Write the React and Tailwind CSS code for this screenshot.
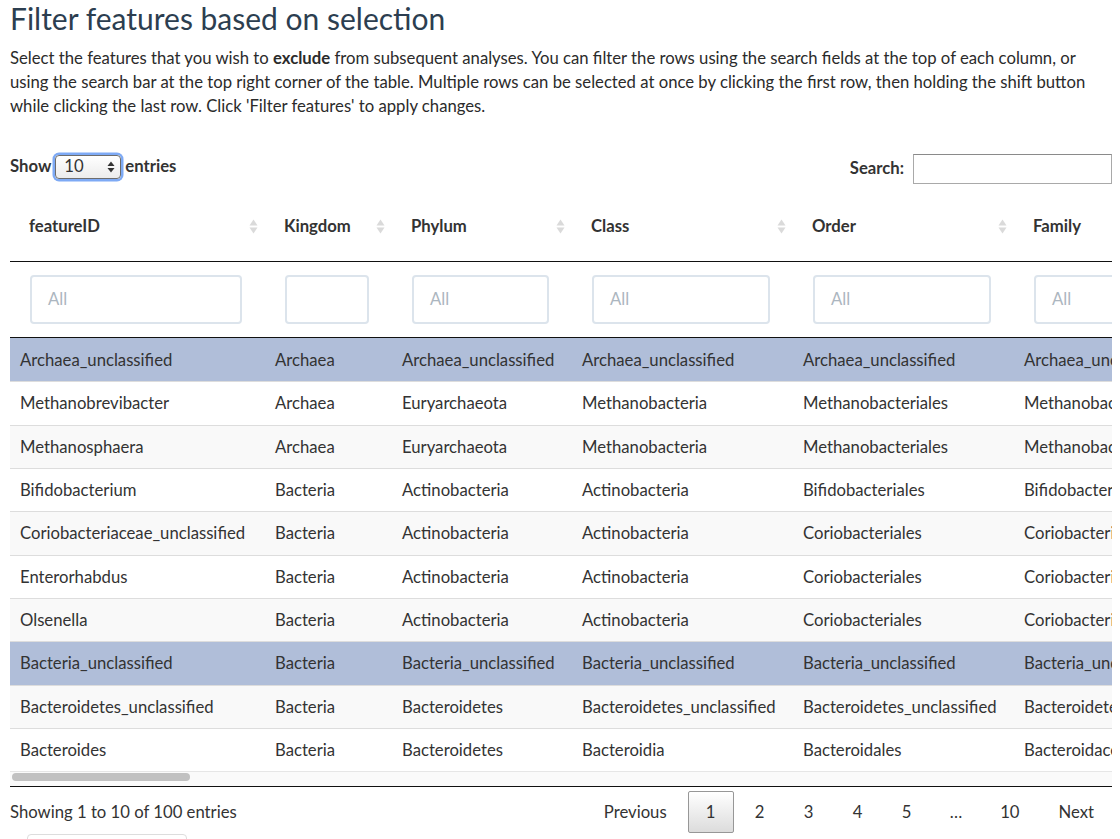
const columns = [
  { name: 'featureID', width: 'w-[255px]' },
  { name: 'Kingdom', width: 'w-[127px]' },
  { name: 'Phylum', width: 'w-[180px]' },
  { name: 'Class', width: 'w-[221px]' },
  { name: 'Order', width: 'w-[221px]' },
  { name: 'Family', width: 'w-[221px]' },
  { name: 'Genus', width: 'w-[221px]' },
];

const rows = [
  { selected: true, cells: ['Archaea_unclassified', 'Archaea', 'Archaea_unclassified', 'Archaea_unclassified', 'Archaea_unclassified', 'Archaea_unclassified', 'Archaea_unclassified'] },
  { cells: ['Methanobrevibacter', 'Archaea', 'Euryarchaeota', 'Methanobacteria', 'Methanobacteriales', 'Methanobacteriaceae', 'Methanobrevibacter'] },
  { cells: ['Methanosphaera', 'Archaea', 'Euryarchaeota', 'Methanobacteria', 'Methanobacteriales', 'Methanobacteriaceae', 'Methanosphaera'] },
  { cells: ['Bifidobacterium', 'Bacteria', 'Actinobacteria', 'Actinobacteria', 'Bifidobacteriales', 'Bifidobacteriaceae', 'Bifidobacterium'] },
  { cells: ['Coriobacteriaceae_unclassified', 'Bacteria', 'Actinobacteria', 'Actinobacteria', 'Coriobacteriales', 'Coriobacteriaceae', 'Coriobacteriaceae_unclassified'] },
  { cells: ['Enterorhabdus', 'Bacteria', 'Actinobacteria', 'Actinobacteria', 'Coriobacteriales', 'Coriobacteriaceae', 'Enterorhabdus'] },
  { cells: ['Olsenella', 'Bacteria', 'Actinobacteria', 'Actinobacteria', 'Coriobacteriales', 'Coriobacteriaceae', 'Olsenella'] },
  { selected: true, cells: ['Bacteria_unclassified', 'Bacteria', 'Bacteria_unclassified', 'Bacteria_unclassified', 'Bacteria_unclassified', 'Bacteria_unclassified', 'Bacteria_unclassified'] },
  { cells: ['Bacteroidetes_unclassified', 'Bacteria', 'Bacteroidetes', 'Bacteroidetes_unclassified', 'Bacteroidetes_unclassified', 'Bacteroidetes_unclassified', 'Bacteroidetes_unclassified'] },
  { cells: ['Bacteroides', 'Bacteria', 'Bacteroidetes', 'Bacteroidia', 'Bacteroidales', 'Bacteroidaceae', 'Bacteroides'] },
];

function SortIcon() {
  return (
    <svg width="9" height="15" viewBox="0 0 9 15" className="shrink-0">
      <path d="M4.5 0.5 L8.5 6.5 L0.5 6.5 Z" fill="#dadada" />
      <path d="M0.5 8.5 L8.5 8.5 L4.5 14.5 Z" fill="#dadada" />
    </svg>
  );
}

function PageButton({ children, active }) {
  return (
    <span
      className={`ml-[3px] min-w-[46px] px-[17px] py-2 text-center leading-6 rounded-[2px] border ${
        active
          ? 'border-[#979797] bg-gradient-to-b from-white to-[#dcdcdc] text-[#333]'
          : 'border-transparent text-[#333]'
      }`}
    >
      {children}
    </span>
  );
}

export default function App() {
  return (
    <div className="w-[1120px] h-[839px] overflow-hidden bg-white text-[#333] font-['Lato','Open_Sans',sans-serif] text-[16.7px]">
      <div className="pl-[10px] pr-[8px]">
        <h1 className="text-[30px] leading-[36px] text-[#2c3e50]">Filter features based on selection</h1>
        <p className="mt-[10px] leading-6 text-[#2b2b2b]">
          Select the features that you wish to <b>exclude</b> from subsequent analyses. You can filter the rows using the search fields at the top of each column, or using the search bar at the top right corner of the table. Multiple rows can be selected at once by clicking the first row, then holding the shift button while clicking the last row. Click 'Filter features' to apply changes.
        </p>

        <div className="mt-[32px] h-[34px] flex justify-between items-start">
          <div className="mt-[3px] h-[28px] flex items-center font-bold">
            <span>Show</span>
            <div className="mx-[4px] w-[66px] h-[24px] rounded-[4px] border border-[#6d6d6d] bg-gradient-to-b from-white to-[#ececec] shadow-[0_0_0_2.5px_#7eaaf5] flex items-center justify-between pl-[8px] pr-[5px] font-normal">
              <span>10</span>
              <svg width="8" height="12" viewBox="0 0 8 12">
                <path d="M4 0.5 L7.5 5 L0.5 5 Z" fill="#333" />
                <path d="M0.5 7 L7.5 7 L4 11.5 Z" fill="#333" />
              </svg>
            </div>
            <span>entries</span>
          </div>
          <div className="mt-[4px] h-[30px] flex items-center font-bold">
            <span className="mr-[9px]">Search:</span>
            <div className="w-[199px] h-[30px] border border-[#a9a9a9] border-t-[#8a8a8a] bg-white"></div>
          </div>
        </div>

        <div className="mt-[8px] overflow-hidden">
          <div className="w-max">
            <div className="h-[70px] flex border-b border-[#111] font-bold">
              {columns.map((c) => (
                <div key={c.name} className={`${c.width} shrink-0 flex items-center justify-between pl-[19px] pr-[7px]`}>
                  <span>{c.name}</span>
                  <SortIcon />
                </div>
              ))}
            </div>
            <div className="h-[76px] flex items-center border-b border-[#111]">
              {columns.map((c) => (
                <div key={c.name} className={`${c.width} shrink-0 pl-[20px] pr-[23px]`}>
                  <div className="h-[49px] rounded-[4px] border-2 border-[#dce4ec] bg-white flex items-center pl-[16px] text-[#acb6c0]">
                    {c.name === 'Kingdom' ? '' : 'All'}
                  </div>
                </div>
              ))}
            </div>
            {rows.map((r, i) => (
              <div
                key={i}
                className={`h-[43.33px] flex items-center pt-[1px] ${i > 0 ? 'border-t border-[#ddd]' : ''} ${
                  r.selected ? 'bg-[#b0bed9]' : i % 2 === 0 ? 'bg-[#f9f9f9]' : 'bg-white'
                }`}
              >
                {r.cells.map((cell, j) => (
                  <div key={j} className={`${columns[j].width} shrink-0 pl-[10px] whitespace-nowrap overflow-hidden`}>
                    {cell}
                  </div>
                ))}
              </div>
            ))}
          </div>
          <div className="h-[16px] border-t border-[#e6e6e6] border-b border-b-[#111] bg-[#fafafa] pt-[1px] pl-[2px]">
            <div className="w-[178px] h-[8px] rounded-full bg-[#c1c1c1]"></div>
          </div>
        </div>

        <div className="pt-[4px] flex justify-between items-center">
          <span>Showing 1 to 10 of 100 entries</span>
          <div className="flex items-center">
            <PageButton>Previous</PageButton>
            <PageButton active>1</PageButton>
            <PageButton>2</PageButton>
            <PageButton>3</PageButton>
            <PageButton>4</PageButton>
            <PageButton>5</PageButton>
            <span className="ml-[3px] px-[17px] leading-6">…</span>
            <PageButton>10</PageButton>
            <PageButton>Next</PageButton>
          </div>
        </div>
        <div className="mt-[1px] ml-[17px] w-[160px] h-[34px] rounded-[4px] border border-[#ddd]"></div>
      </div>
    </div>
  );
}
